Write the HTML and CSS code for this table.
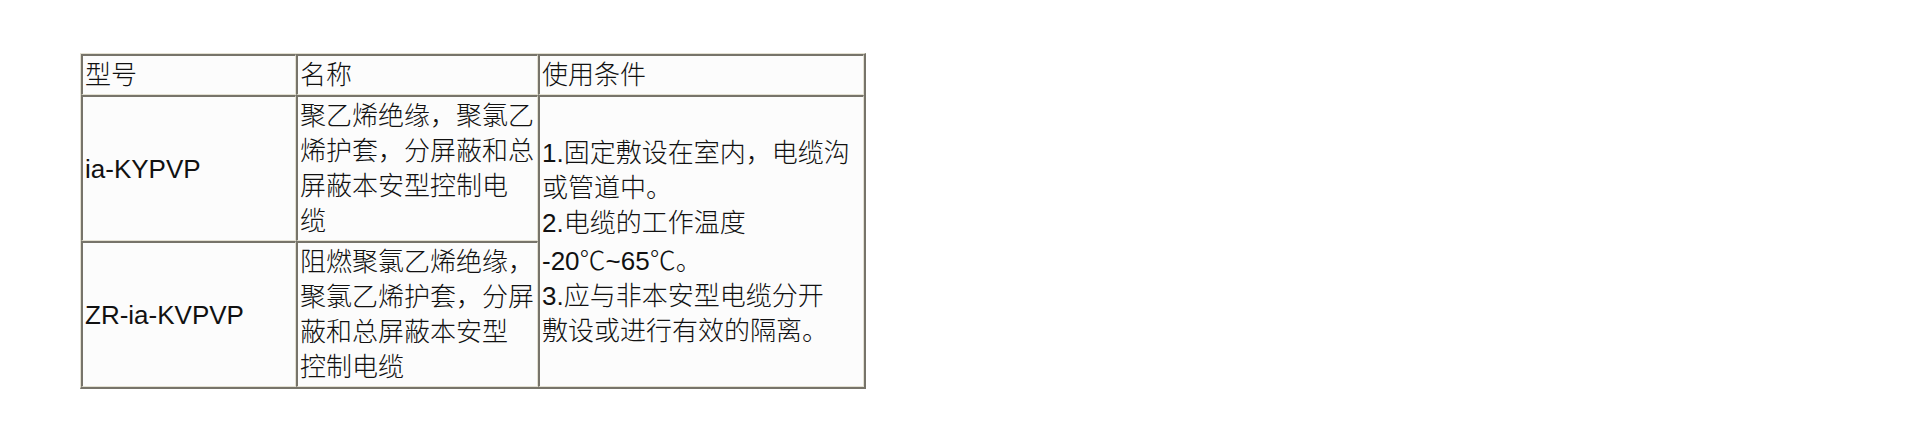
FILE: index.html
```html
<!DOCTYPE html>
<html lang="zh-CN">
<head>
<meta charset="utf-8">
<title>型号 名称 使用条件</title>
<link rel="stylesheet" href="styles.css">
</head>
<body>
<div class="page">
  <table class="spec">
    <tbody>
      <tr class="head">
        <td class="c1">型号</td>
        <td class="c2">名称</td>
        <td class="c3">使用条件</td>
      </tr>
      <tr class="row">
        <td class="model">ia-KYPVP</td>
        <td class="name">聚乙烯绝缘，聚氯乙<br>烯护套，分屏蔽和总<br>屏蔽本安型控制电<br>缆</td>
        <td class="cond" rowspan="2">1.固定敷设在室内，电缆沟<br>或管道中。<br>2.电缆的工作温度<br>-20<span class="cjk">℃</span>~65<span class="cjk">℃</span>。<br>3.应与非本安型电缆分开<br>敷设或进行有效的隔离。</td>
      </tr>
      <tr class="row">
        <td class="model">ZR-ia-KVPVP</td>
        <td class="name">阻燃聚氯乙烯绝缘，<br>聚氯乙烯护套，分屏<br>蔽和总屏蔽本安型<br>控制电缆</td>
      </tr>
    </tbody>
  </table>
</div>
</body>
</html>
```

FILE: styles.css
```css
html, body {
  margin: 0;
  padding: 0;
  background: #ffffff;
}

.page {
  padding: 53px 0 0 80px;
}

.spec {
  box-sizing: border-box;
  width: 786px;
  table-layout: fixed;
  border-collapse: separate;
  border-spacing: 0;
  border-style: solid;
  border-width: 1px 2px 2px 1px;
  border-color: #e3e0d2 #77746a #77746a #e3e0d2;
  font-family: "Liberation Sans", "Noto Sans CJK SC", sans-serif;
  font-size: 26px;
  font-weight: 300;
  line-height: 35px;
  color: #111111;
}

.spec td {
  box-sizing: border-box;
  background: #fcfcfc;
  border-style: solid;
  border-width: 2px 1px 1px 2px;
  border-color: #77746a #e3e0d2 #e3e0d2 #77746a;
  padding: 2px 1px 1px 2px;
  white-space: nowrap;
  vertical-align: middle;
  overflow: hidden;
}

.spec .c1 { width: 215px; }
.spec .c2 { width: 242px; }
.spec .c3 { width: 326px; }

.spec .name {
  vertical-align: top;
}

.cjk {
  font-family: "Noto Sans CJK SC", sans-serif;
}
```
